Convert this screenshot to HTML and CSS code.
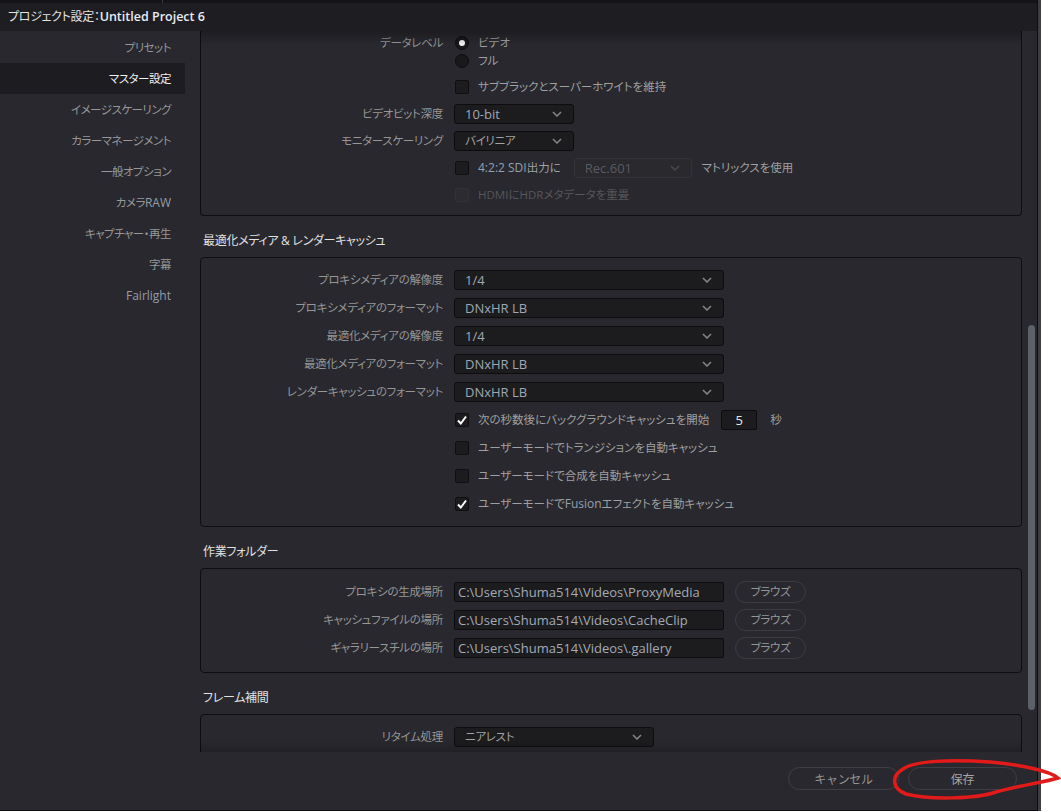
FILE: index.html
```html
<!DOCTYPE html>
<html lang="ja">
<head>
    <meta charset="UTF-8">
    <title>プロジェクト設定</title>
    <link rel="stylesheet" href="styles.css">
</head>
<body>
<div class="dialog">
    <div class="topstrip"><span></span></div>
    <header class="titlebar">プロジェクト設定：<b>Untitled Project 6</b></header>

    <div class="main">
        <nav class="sidebar">
            <div class="nav-item">プリセット</div>
            <div class="nav-item on">マスター設定</div>
            <div class="nav-item">イメージスケーリング</div>
            <div class="nav-item">カラーマネージメント</div>
            <div class="nav-item">一般オプション</div>
            <div class="nav-item">カメラ<span class="latin">RAW</span></div>
            <div class="nav-item">キャプチャー・再生</div>
            <div class="nav-item">字幕</div>
            <div class="nav-item"><span class="latin">Fairlight</span></div>
        </nav>

        <div class="scroll">
            <!-- top of this box is scrolled out of view -->
            <div class="box cut">
                <div class="row tall">
                    <div class="label">データレベル</div>
                    <div class="radios">
                        <div class="ctl line"><span class="radio on"></span>ビデオ</div>
                        <div class="ctl line"><span class="radio"></span>フル</div>
                    </div>
                </div>
                <div class="row">
                    <div></div>
                    <div class="ctl"><span class="cb"></span>サブブラックとスーパーホワイトを維持</div>
                </div>
                <div class="row">
                    <div class="label">ビデオビット深度</div>
                    <div class="ctl"><div class="dd w120"><span>10-bit</span><svg class="chev" width="10" height="6" viewBox="0 0 10 6"><path d="M1 1l4 4 4-4"/></svg></div></div>
                </div>
                <div class="row">
                    <div class="label">モニタースケーリング</div>
                    <div class="ctl"><div class="dd w120"><span class="jp">バイリニア</span><svg class="chev" width="10" height="6" viewBox="0 0 10 6"><path d="M1 1l4 4 4-4"/></svg></div></div>
                </div>
                <div class="row">
                    <div></div>
                    <div class="ctl"><span class="cb"></span><span class="latin">4:2:2 SDI</span>出力に
                        <div class="dd off w118"><span>Rec.601</span><svg class="chev" width="10" height="6" viewBox="0 0 10 6"><path d="M1 1l4 4 4-4"/></svg></div>
                        マトリックスを使用
                    </div>
                </div>
                <div class="row">
                    <div></div>
                    <div class="ctl dim"><span class="cb off"></span>HDMIにHDRメタデータを重畳</div>
                </div>
            </div>

            <h3 class="sec">最適化メディア &amp; レンダーキャッシュ</h3>
            <div class="box">
                <div class="row">
                    <div class="label">プロキシメディアの解像度</div>
                    <div class="ctl"><div class="dd w270"><span>1/4</span><svg class="chev" width="10" height="6" viewBox="0 0 10 6"><path d="M1 1l4 4 4-4"/></svg></div></div>
                </div>
                <div class="row">
                    <div class="label">プロキシメディアのフォーマット</div>
                    <div class="ctl"><div class="dd w270"><span>DNxHR LB</span><svg class="chev" width="10" height="6" viewBox="0 0 10 6"><path d="M1 1l4 4 4-4"/></svg></div></div>
                </div>
                <div class="row">
                    <div class="label">最適化メディアの解像度</div>
                    <div class="ctl"><div class="dd w270"><span>1/4</span><svg class="chev" width="10" height="6" viewBox="0 0 10 6"><path d="M1 1l4 4 4-4"/></svg></div></div>
                </div>
                <div class="row">
                    <div class="label">最適化メディアのフォーマット</div>
                    <div class="ctl"><div class="dd w270"><span>DNxHR LB</span><svg class="chev" width="10" height="6" viewBox="0 0 10 6"><path d="M1 1l4 4 4-4"/></svg></div></div>
                </div>
                <div class="row">
                    <div class="label">レンダーキャッシュのフォーマット</div>
                    <div class="ctl"><div class="dd w270"><span>DNxHR LB</span><svg class="chev" width="10" height="6" viewBox="0 0 10 6"><path d="M1 1l4 4 4-4"/></svg></div></div>
                </div>
                <div class="row">
                    <div></div>
                    <div class="ctl"><span class="cb"><svg width="12" height="12" viewBox="0 0 12 12"><path d="M2 6.5l2.8 3L10 2.5"/></svg></span>次の秒数後にバックグラウンドキャッシュを開始<span class="num">5</span><span class="unit">秒</span></div>
                </div>
                <div class="row">
                    <div></div>
                    <div class="ctl"><span class="cb"></span>ユーザーモードでトランジションを自動キャッシュ</div>
                </div>
                <div class="row">
                    <div></div>
                    <div class="ctl"><span class="cb"></span>ユーザーモードで合成を自動キャッシュ</div>
                </div>
                <div class="row">
                    <div></div>
                    <div class="ctl"><span class="cb"><svg width="12" height="12" viewBox="0 0 12 12"><path d="M2 6.5l2.8 3L10 2.5"/></svg></span>ユーザーモードで<span class="latin">Fusion</span>エフェクトを自動キャッシュ</div>
                </div>
            </div>

            <h3 class="sec">作業フォルダー</h3>
            <div class="box roomy">
                <div class="row">
                    <div class="label">プロキシの生成場所</div>
                    <div class="ctl"><div class="path">C:\Users\Shuma514\Videos\ProxyMedia</div><span class="browse">ブラウズ</span></div>
                </div>
                <div class="row">
                    <div class="label">キャッシュファイルの場所</div>
                    <div class="ctl"><div class="path">C:\Users\Shuma514\Videos\CacheClip</div><span class="browse">ブラウズ</span></div>
                </div>
                <div class="row">
                    <div class="label">ギャラリースチルの場所</div>
                    <div class="ctl"><div class="path">C:\Users\Shuma514\Videos\.gallery</div><span class="browse">ブラウズ</span></div>
                </div>
            </div>

            <h3 class="sec">フレーム補間</h3>
            <div class="box">
                <div class="row">
                    <div class="label">リタイム処理</div>
                    <div class="ctl"><div class="dd w200"><span class="jp">ニアレスト</span><svg class="chev" width="10" height="6" viewBox="0 0 10 6"><path d="M1 1l4 4 4-4"/></svg></div></div>
                </div>
            </div>
        </div>

        <div class="scrollbar"><div class="thumb"></div></div>
    </div>

    <footer class="footer">
        <button class="btn cancel">キャンセル</button>
        <button class="btn save">保存</button>
    </footer>
</div>

<!-- hand-drawn red mark around the save button -->
<svg class="scribble" width="1061" height="812" viewBox="0 0 1061 812">
    <path d="M903 769 C914 761, 950 759, 990 762 C1022 765, 1050 771, 1058 778 C1046 782, 1016 786, 996 792 C976 799, 930 800, 906 794 C893 789, 890 777, 903 769"/>
</svg>
</body>
</html>
```

FILE: styles.css
```css
* {
    box-sizing: border-box;
}
body {
    margin: 0;
    background: #ffffff;
    font-family: "Open Sans", "Noto Sans CJK JP", sans-serif;
    font-size: 11.5px;
    line-height: 16px;
    letter-spacing: -0.3px;
    font-feature-settings: "palt";
    position: relative;
}
.dialog {
    width: 1038px;
    height: 811px;
    background: #28282e;
    border-right: 1px solid #0c0c0e;
    border-bottom: 1px solid #0c0c0e;
    box-shadow: 3px 0 0 #3d3d42;
    display: flex;
    flex-direction: column;
}
.topstrip {
    height: 3px;
    background: #141416;
    display: flex;
}
.topstrip span {
    width: 163px;
    border-right: 1px solid #3a3a3e;
}
.titlebar {
    height: 28px;
    background: #1e1e22;
    display: flex;
    align-items: center;
    padding-left: 8px;
    color: #e2e2e2;
    font-size: 12px;
}
.titlebar b {
    font-weight: 600;
    font-size: 12.5px;
    letter-spacing: 0;
    color: #e6edf5;
}

.main {
    display: flex;
    height: 721px;
}
.sidebar {
    width: 200px;
    flex: none;
    padding-top: 1px;
}
.nav-item {
    width: 185px;
    height: 31px;
    line-height: 31px;
    text-align: right;
    padding-right: 14px;
    color: #979797;
    letter-spacing: -0.5px;
}
.nav-item .latin {
    color: #979da6;
    font-size: 12px;
}
.nav-item.on {
    background: #1d1d21;
    color: #f0f0f0;
}

.scroll {
    width: 822px;
    flex: none;
    overflow: hidden;
    position: relative;
}
.scroll::before {
    content: "";
    position: absolute;
    left: 0;
    right: 0;
    top: 0;
    height: 14px;
    background: linear-gradient(rgba(0, 0, 0, 0.3), rgba(0, 0, 0, 0));
}
.scroll::after {
    content: "";
    position: absolute;
    left: 0;
    right: 0;
    bottom: 0;
    height: 12px;
    background: linear-gradient(rgba(0, 0, 0, 0), rgba(0, 0, 0, 0.2));
}
.scrollbar {
    width: 15px;
    flex: none;
    padding: 294px 0 0 6px;
}
.thumb {
    width: 7px;
    height: 385px;
    border-radius: 4px;
    background: #5b6069;
}

.box {
    border: 1px solid #0e0e10;
    border-radius: 4px;
    padding: 8px 0;
}
.box.roomy {
    padding: 9px 0 10px;
}
.box.cut {
    border-top: none;
    border-radius: 0 0 4px 4px;
    padding: 3px 0 7px;
}
.sec {
    margin: 0;
    height: 41px;
    padding: 17px 0 0 3px;
    font-size: 12px;
    line-height: 16px;
    font-weight: normal;
    color: #e2e2e2;
}
.row {
    display: grid;
    grid-template-columns: 242px auto;
    column-gap: 11px;
    align-items: center;
    height: 28px;
}
.box.cut .row {
    height: 27px;
}
.box.cut .row.tall {
    height: 36px;
    margin-bottom: 3px;
    align-items: start;
}
.row.tall .label {
    line-height: 18px;
}
.label {
    text-align: right;
    color: #969696;
}
.ctl {
    display: flex;
    align-items: center;
    color: #a0a0a0;
    white-space: nowrap;
    letter-spacing: 0;
}
.ctl.line {
    height: 18px;
}
.ctl.dim {
    color: #56565b;
}
.latin {
    color: #93a0b3;
    letter-spacing: 0;
    font-size: 12px;
}

.radio {
    width: 14px;
    height: 14px;
    border-radius: 50%;
    background: #19191c;
    border: 1px solid #0e0e10;
    margin: 0 9px 0 1px;
    display: flex;
    align-items: center;
    justify-content: center;
}
.radio.on::after {
    content: "";
    width: 6px;
    height: 6px;
    border-radius: 50%;
    background: #f0f0f0;
}
.cb {
    width: 14px;
    height: 14px;
    border: 1px solid #0f0f11;
    background: #1c1c1f;
    border-radius: 2px;
    margin: 0 9px 0 1px;
    display: flex;
    align-items: center;
    justify-content: center;
}
.cb.off {
    background: #2b2b30;
    border-color: #313136;
}
.cb svg path {
    fill: none;
    stroke: #ffffff;
    stroke-width: 2;
}

.dd {
    height: 20px;
    background: #1c1c1f;
    border: 1px solid #0d0d0f;
    border-radius: 3px;
    display: flex;
    align-items: center;
    justify-content: space-between;
    padding: 0 11px 0 10px;
    color: #9fa7b3;
    font-size: 13px;
    letter-spacing: 0;
}
.dd .jp {
    font-size: 11.5px;
    letter-spacing: -0.3px;
    color: #a3a3a3;
}
.dd.off {
    background: #29292e;
    border-color: #323237;
    color: #5a5a5f;
    margin: 0 10px 0 13px;
}
.w118 { width: 118px; }
.w120 { width: 120px; }
.w200 { width: 200px; }
.w270 { width: 270px; }
.chev path {
    fill: none;
    stroke: #86868a;
    stroke-width: 1.5;
}
.dd.off .chev path {
    stroke: #48484d;
}

.num {
    width: 36px;
    height: 20px;
    margin-left: 12px;
    background: #1c1c1f;
    border: 1px solid #0d0d0f;
    border-radius: 2px;
    text-align: center;
    line-height: 18px;
    color: #e6e6e6;
    font-size: 13px;
}
.unit {
    margin-left: 13px;
}
.path {
    width: 270px;
    height: 20px;
    background: #1c1c1f;
    border: 1px solid #0d0d0f;
    border-radius: 2px;
    padding-left: 3px;
    line-height: 18px;
    color: #a3abb6;
    font-size: 13px;
}
.browse {
    margin-left: 11px;
    width: 71px;
    height: 22px;
    border: 1px solid #3c3c42;
    border-radius: 11px;
    color: #979797;
    text-align: center;
    line-height: 20px;
    letter-spacing: -0.3px;
}

.footer {
    height: 57px;
    display: flex;
    justify-content: flex-end;
    gap: 9px;
    padding: 15px 20px 0 0;
}
.btn {
    height: 23px;
    border: 1px solid #3e3e44;
    border-radius: 12px;
    background: transparent;
    color: #949494;
    font-family: inherit;
    font-size: 12px;
    letter-spacing: -0.3px;
}
.cancel { width: 111px; }
.save { width: 109px; color: #a4a4a4; }

.scribble {
    position: absolute;
    left: 0;
    top: 0;
    pointer-events: none;
}
.scribble path {
    fill: none;
    stroke: #e21a1a;
    stroke-width: 3.5;
    stroke-linecap: round;
}
```
